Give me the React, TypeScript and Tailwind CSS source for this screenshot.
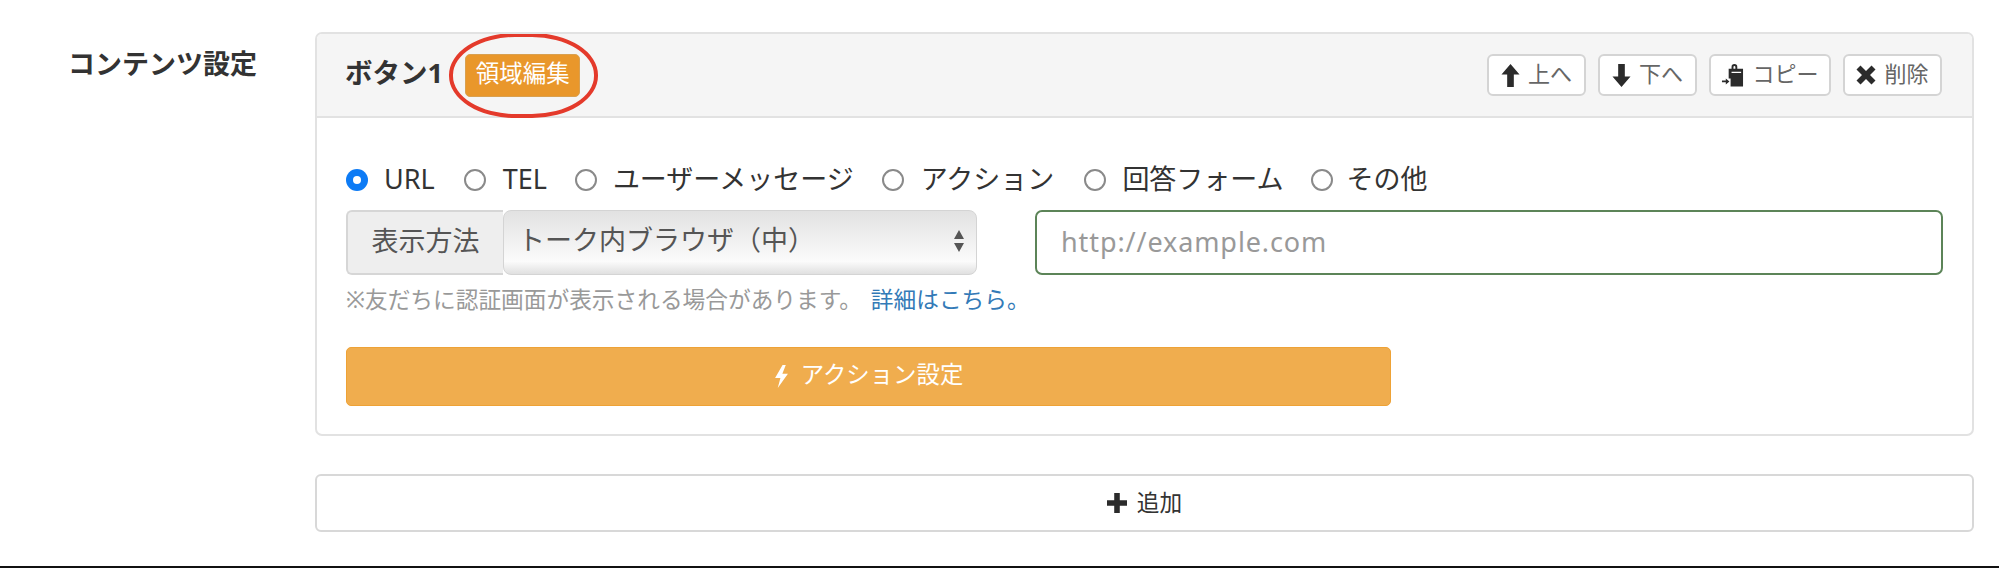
import React from 'react';

const ArrowUp = () => (
  <svg viewBox="0 0 20 24" className="w-[19px] h-[23px] fill-[#2b2b2b]">
    <path d="M10 0 L19.5 11 L13.5 11 L13.5 24 L6.5 24 L6.5 11 L0.5 11 Z" />
  </svg>
);

const ArrowDown = () => (
  <svg viewBox="0 0 20 24" className="w-[19px] h-[23px] fill-[#2b2b2b]">
    <path d="M6.5 0 L13.5 0 L13.5 13 L19.5 13 L10 24 L0.5 13 L6.5 13 Z" />
  </svg>
);

const CopyIcon = () => (
  <svg viewBox="0 0 24 24" className="w-[23px] h-[23px] fill-[#2b2b2b]">
    <path d="M8 5 H11 V3 A3 3 0 0 1 17 3 V5 H23 V23.5 H10 V15 H8 Z" />
    <path className="fill-white" d="M13 3.2 A1 1 0 0 1 15 3.2 V5 H13 Z" />
    <path className="fill-white" d="M11 8 L21 8 L21 9.5 L11 9.5 Z" />
    <path d="M1 17.3 H5 V15 L8.8 18.2 L5 21.4 V19.1 H1 Z" />
  </svg>
);

const CrossIcon = () => (
  <svg viewBox="0 0 20 20" className="w-[20px] h-[20px] fill-[#2b2b2b]">
    <path d="M4.5 0.5 L10 6 L15.5 0.5 L19.5 4.5 L14 10 L19.5 15.5 L15.5 19.5 L10 14 L4.5 19.5 L0.5 15.5 L6 10 L0.5 4.5 Z" />
  </svg>
);

const BoltIcon = () => (
  <svg viewBox="0 0 14 24" preserveAspectRatio="none" className="w-[15px] h-[23px] fill-white">
    <path d="M8 0 L1 13.5 L6 13.5 L3.5 24 L13 9 L7.8 9 L11 0 Z" />
  </svg>
);

const PlusIcon = () => (
  <svg viewBox="0 0 18 18" className="w-[20px] h-[20px] fill-[#2b2b2b]">
    <path d="M6.5 0 H11.5 V6.5 H18 V11.5 H11.5 V18 H6.5 V11.5 H0 V6.5 H6.5 Z" />
  </svg>
);

const SmallButton = ({ icon, label, width }: { icon: React.ReactNode; label: string; width: string }) => (
  <button className={`flex items-center justify-center gap-[8px] h-[42px] bg-white border-2 border-[#d4d4d4] rounded-[6px] text-[22px] text-[#666] ${width}`}>
    {icon}
    <span className="pb-[4px]">{label}</span>
  </button>
);

const Radio = ({ label, checked, className }: { label: string; checked?: boolean; className: string }) => (
  <label className={`flex items-center ${className}`}>
    {checked ? (
      <span className="w-[22px] h-[22px] rounded-full bg-[#0d7bf5] flex items-center justify-center">
        <span className="w-[8px] h-[8px] rounded-full bg-white" />
      </span>
    ) : (
      <span className="w-[22px] h-[22px] rounded-full bg-white border-2 border-[#8a8a8a]" />
    )}
    <span className="text-[27px] leading-[36px] text-[#333] pb-[2px]">{label}</span>
  </label>
);

export default function App() {
  return (
    <div className="w-[1999px] h-[568px] bg-white flex flex-col font-['Noto_Sans','Noto_Sans_CJK_JP',sans-serif]">
      <div className="flex flex-1 pt-[32px] pl-[68px] pr-[25px]">
        <div className="w-[247px] shrink-0 pt-[13px] text-[27px] leading-[36px] font-bold text-[#333] font-['Noto_Sans_CJK_JP',sans-serif]">
          コンテンツ設定
        </div>

        <div className="flex-1 flex flex-col">
          <div className="border-2 border-[#e2e2e2] rounded-[7px] overflow-hidden h-[404px]">
            <div className="h-[84px] bg-[#f5f5f5] border-b-2 border-[#e2e2e2] flex items-center pl-[28px] pr-[30px]">
              <span className="text-[27.5px] font-bold text-[#333] pb-[5px]">ボタン1</span>
              <div className="relative ml-[22px]">
                <span className="flex items-center justify-center pb-[3px] w-[115px] h-[43px] bg-[#e9972b] border border-[#d9a050] rounded-[5px] text-[23.5px] text-white">
                  領域編集
                </span>
                <span className="absolute -left-[16px] -top-[21px] w-[149px] h-[85px] rounded-[66px/42px] border-[4px] border-[#e43a2b]" />
              </div>
              <div className="ml-auto flex gap-[12px]">
                <SmallButton icon={<ArrowUp />} label="上へ" width="w-[99px]" />
                <SmallButton icon={<ArrowDown />} label="下へ" width="w-[99px]" />
                <SmallButton icon={<CopyIcon />} label="コピー" width="w-[122px]" />
                <SmallButton icon={<CrossIcon />} label="削除" width="w-[99px]" />
              </div>
            </div>

            <div className="pt-[44px] pl-[29px] pr-[28px]">
              <div className="flex items-center h-[36px]">
                <Radio label="URL" checked className="gap-[16px] mr-[29px]" />
                <Radio label="TEL" className="gap-[17px] mr-[28px]" />
                <Radio label="ユーザーメッセージ" className="gap-[16px] mr-[28px]" />
                <Radio label="アクション" className="gap-[17px] mr-[30px]" />
                <Radio label="回答フォーム" className="gap-[16px] mr-[27px]" />
                <Radio label="その他" className="gap-[14px]" />
              </div>

              <div className="flex mt-[12px]">
                <div className="flex w-[631px]">
                  <span className="w-[157px] h-[65px] flex items-center justify-center pb-[3px] bg-[#eeeeee] border-2 border-r-0 border-[#d6d6d6] rounded-l-[6px] text-[27px] text-[#555]">
                    表示方法
                  </span>
                  <div className="relative w-[474px] h-[65px] flex items-center pl-[14px] pb-[4px] rounded-[8px] border border-[#d4d4d4] bg-linear-to-b from-[#e2e2e2] via-[#fbfbfb] via-80% to-[#e0e0e0] text-[27px] text-[#555]">
                    トーク内ブラウザ（中）
                    <svg viewBox="0 0 12 24" className="absolute right-[11px] top-[18px] w-[12px] h-[24px] fill-[#555]">
                      <path d="M6 1 L11 10 H1 Z M1 14 H11 L6 23 Z" />
                    </svg>
                  </div>
                </div>
                <input
                  placeholder="http://example.com"
                  className="ml-[58px] w-[908px] h-[65px] px-[24px] pb-[2px] bg-white border-2 border-[#5c8458] rounded-[7px] text-[27px] tracking-[0.9px] placeholder:text-[#999] outline-none"
                />
              </div>

              <p className="mt-[10px] text-[22.7px] leading-[30px] text-[#999]">
                ※友だちに認証画面が表示される場合があります。
                <a className="ml-[9px] text-[#337ab7]">詳細はこちら。</a>
              </p>

              <button className="mt-[32px] w-[1045px] h-[59px] flex items-center justify-center gap-[12px] bg-[#f0ad4e] border border-[#eea236] rounded-[5px] text-[23.4px] text-white">
                <BoltIcon />
                <span className="pb-[4px]">アクション設定</span>
              </button>
            </div>
          </div>

          <button className="mt-[38px] h-[58px] flex items-center justify-center gap-[10px] bg-white border-2 border-[#d8d8d8] rounded-[6px] text-[22.7px] text-[#333]">
            <PlusIcon />
            <span>追加</span>
          </button>
        </div>
      </div>
      <div className="h-[2px] bg-[#111]" />
    </div>
  );
}
